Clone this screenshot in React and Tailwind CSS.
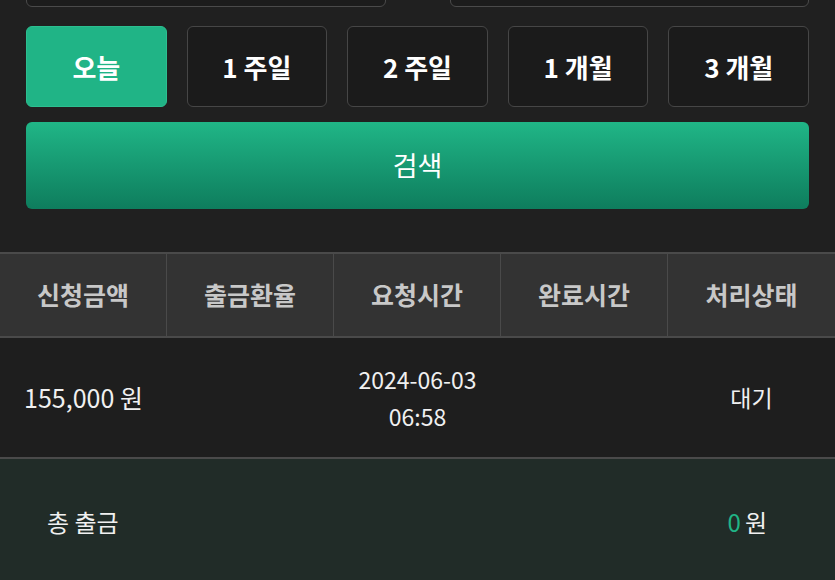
import React, { useState } from 'react';

const periods = ['오늘', '1 주일', '2 주일', '1 개월', '3 개월'];
const columns = ['신청금액', '출금환율', '요청시간', '완료시간', '처리상태'];

const App = () => {
  const [active, setActive] = useState(0);

  return (
    <div
      className="min-h-screen overflow-hidden bg-[#202020] text-white"
      style={{ fontFamily: '"Noto Sans CJK KR", "Noto Sans", sans-serif' }}
    >
      <div className="px-[26px]">
        {/* date inputs (cut off at top) */}
        <div className="-mt-[41px] grid grid-cols-2 gap-[64px]">
          <div className="h-[48px] rounded-md border border-[#4a4a4a] bg-[#1c1c1c]" />
          <div className="h-[48px] rounded-md border border-[#4a4a4a] bg-[#1c1c1c]" />
        </div>

        {/* period buttons */}
        <div className="mt-[19px] grid grid-cols-5 gap-[20px]">
          {periods.map((p, i) => (
            <button
              key={p}
              onClick={() => setActive(i)}
              className={
                i === active
                  ? 'h-[81px] rounded-md border border-[#2cbf90] bg-[#20b486] text-[26px] font-bold text-white'
                  : 'h-[81px] rounded-md border border-[#464646] bg-[#1b1b1b] text-[26px] font-bold text-white'
              }
            >
              {p}
            </button>
          ))}
        </div>

        <button className="mt-[15px] h-[87px] w-full rounded-md bg-gradient-to-b from-[#20b687] to-[#0e7d5d] text-[27px] text-white">
          검색
        </button>
      </div>

      {/* table */}
      <div className="mt-[43px] border-t-2 border-[#4a4a4a]">
        <div className="grid grid-cols-5 border-b-2 border-[#4a4a4a] bg-[#333333]">
          {columns.map((c, i) => (
            <div
              key={c}
              className={
                i < 4
                  ? 'flex h-[82px] items-center justify-center border-r border-[#4a4a4a] text-[25px] font-bold text-[#c8c8c8]'
                  : 'flex h-[82px] items-center justify-center text-[25px] font-bold text-[#c8c8c8]'
              }
            >
              {c}
            </div>
          ))}
        </div>

        <div className="grid h-[121px] grid-cols-5 items-center border-b-2 border-[#4a4a4a] bg-[#1e1e1e] text-[23px] text-[#f0f0f0]">
          <div className="text-center text-[25px]">155,000 원</div>
          <div />
          <div className="text-center leading-[37px]">
            2024-06-03
            <br />
            06:58
          </div>
          <div />
          <div className="text-center">대기</div>
        </div>

        <div className="flex h-[125px] items-center justify-between bg-[#212c28] pl-[47px] pr-[68px] text-[24px] text-[#f0f0f0]">
          <span>총 출금</span>
          <span>
            <span className="text-[#20b486]">0</span>
            <span className="ml-[4px]">원</span>
          </span>
        </div>
      </div>
    </div>
  );
};

export default App;
